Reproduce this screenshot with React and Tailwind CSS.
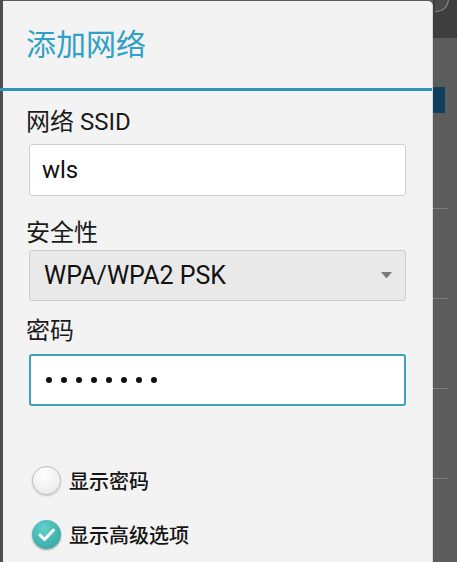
const Dots = ({ n }) => (
  <div className="flex items-center gap-[9px]">
    {Array.from({ length: n }).map((_, i) => (
      <div key={i} className="w-[6px] h-[6px] rounded-full bg-[#111]" />
    ))}
  </div>
);

const Radio = ({ checked, label }) => (
  <div className="flex items-center h-[28px]">
    {checked ? (
      <div className="w-[29px] h-[29px] rounded-full bg-[radial-gradient(circle_at_40%_30%,#5fd0cb,#2f9f9b)] shadow-[0_1px_2px_rgba(0,0,0,0.35)] flex items-center justify-center">
        <svg width="29" height="29" viewBox="0 0 29 29">
          <path d="M8 15 L12.5 19.5 L21.5 10" fill="none" stroke="#fff" strokeWidth="3" strokeLinecap="round" strokeLinejoin="round" />
        </svg>
      </div>
    ) : (
      <div className="w-[29px] h-[29px] rounded-full border border-[#bdbdbd] bg-[radial-gradient(circle_at_40%_30%,#ffffff,#e6e6e6)] shadow-[0_1px_2px_rgba(0,0,0,0.2)]" />
    )}
    <span className="ml-[8px] mt-[3px] text-[20px] leading-none font-medium text-[#151515]">{label}</span>
  </div>
);

export default function App() {
  return (
    <div
      className="w-[457px] h-[562px] overflow-hidden flex bg-[#5c5c5c]"
      style={{ fontFamily: "Roboto, 'Noto Sans CJK SC', sans-serif" }}
    >
      {/* left strip */}
      <div className="w-[3px] shrink-0 bg-[#4e4e4e] flex flex-col">
        <div className="mt-[88px] h-[3px] bg-[#2f93b5]" />
      </div>

      {/* dialog */}
      <div className="w-[430px] shrink-0 bg-[#f3f3f3] rounded-tr-[5px] mt-[1px] border-r border-[#d8d8d8] flex flex-col">
        <div className="h-[87px] flex items-center pl-[23px]">
          <span className="text-[30px] leading-none text-[#2fa0c6]">添加网络</span>
        </div>
        <div className="h-[3px] bg-[#2f93b5]" />

        <div className="pl-[23px] flex flex-col">
          <div className="mt-[20px] text-[24px] leading-[22px] text-[#1b1b1b]">网络 SSID</div>
          <div className="mt-[11px] ml-[3px] w-[377px] h-[52px] bg-white border border-[#cfcfcf] rounded-[3px] flex items-center pl-[12px]">
            <span className="text-[24px] text-[#111]">wls</span>
          </div>

          <div className="mt-[26px] text-[24px] leading-[22px] text-[#1b1b1b]">安全性</div>
          <div className="mt-[6px] ml-[3px] w-[377px] h-[51px] bg-[#e9e9e9] border border-[#cdcdcd] rounded-[3px] flex items-center justify-between pl-[14px] pr-[13px]">
            <span className="text-[25px] text-[#111]">WPA/WPA2 PSK</span>
            <svg width="11" height="7" viewBox="0 0 11 7">
              <path d="M0 0 H11 L5.5 6.5 Z" fill="#7a7a7a" />
            </svg>
          </div>

          <div className="mt-[19px] text-[24px] leading-[22px] text-[#1b1b1b]">密码</div>
          <div className="mt-[12px] ml-[3px] w-[377px] h-[52px] bg-white border-2 border-[#3ea2b8] rounded-[3px] flex items-center pl-[15px]">
            <Dots n={8} />
          </div>

          <div className="mt-[60px] ml-[6px] flex flex-col gap-[26px]">
            <Radio label="显示密码" />
            <Radio checked label="显示高级选项" />
          </div>
        </div>
      </div>

      {/* right background strip */}
      <div className="flex-1 flex flex-col">
        <div className="h-[38px] bg-[#3e3e3e] flex">
          <div className="ml-[2px] -mt-[14px] w-[14px] h-[26px] rounded-br-full rounded-tr-full border border-[#8a8a8a] border-l-0 bg-[#4a4a4a]" />
        </div>
        <div className="mt-[49px] w-[12px] h-[26px] bg-[#0f3f5c]" />
        <div className="mt-[95px] w-[15px] h-px bg-[#7c7c7c]" />
        <div className="mt-[89px] w-[15px] h-px bg-[#7c7c7c]" />
        <div className="mt-[89px] w-[15px] h-px bg-[#7c7c7c]" />
        <div className="mt-[89px] w-[15px] h-px bg-[#7c7c7c]" />
      </div>
    </div>
  );
}
